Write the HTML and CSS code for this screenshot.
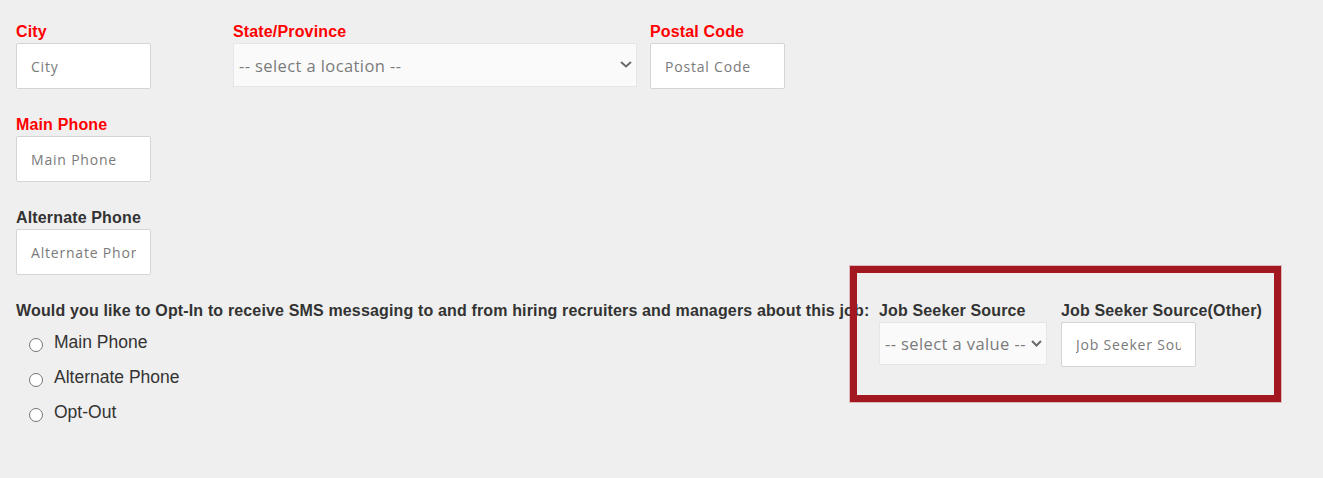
FILE: index.html
```html
<!DOCTYPE html>
<html lang="en">
<head>
    <meta charset="UTF-8">
    <title>Contact Information</title>
    <link rel="stylesheet" href="styles.css">
</head>
<body>
    <form class="form">
        <div class="row row-address">
            <div class="field">
                <label class="required" for="city">City</label>
                <input type="text" id="city" name="city" placeholder="City">
            </div>
            <div class="field">
                <label class="required" for="state">State/Province</label>
                <div class="select-wrap">
                    <select id="state" name="state" class="select-location">
                        <option value="">-- select a location --</option>
                    </select>
                    <svg class="chevron" width="12" height="7" viewBox="0 0 12 7"><polyline points="1,1 6,5.5 11,1" fill="none" stroke="#6a6a6a" stroke-width="2"/></svg>
                </div>
            </div>
            <div class="field">
                <label class="required" for="postalCode">Postal Code</label>
                <input type="text" id="postalCode" name="postalCode" placeholder="Postal Code">
            </div>
        </div>

        <div class="field">
            <label class="required" for="mainPhone">Main Phone</label>
            <input type="text" id="mainPhone" name="mainPhone" placeholder="Main Phone">
        </div>

        <div class="field">
            <label for="altPhone">Alternate Phone</label>
            <input type="text" id="altPhone" name="altPhone" placeholder="Alternate Phone">
        </div>

        <div class="row row-sms">
            <div class="sms">
                <label>Would you like to Opt-In to receive SMS messaging to and from hiring recruiters and managers about this job:</label>
                <ul class="radio-list">
                    <li><input type="radio" id="smsMain" name="sms" value="main"><span>Main Phone</span></li>
                    <li><input type="radio" id="smsAlt" name="sms" value="alternate"><span>Alternate Phone</span></li>
                    <li><input type="radio" id="smsOut" name="sms" value="out"><span>Opt-Out</span></li>
                </ul>
            </div>
            <div class="field source">
                <label for="source">Job Seeker Source</label>
                <div class="select-wrap">
                    <select id="source" name="source" class="select-source">
                        <option value="">-- select a value --</option>
                    </select>
                    <svg class="chevron" width="11" height="7" viewBox="0 0 11 7"><polyline points="1,1 5.5,5.5 10,1" fill="none" stroke="#6a6a6a" stroke-width="2"/></svg>
                </div>
            </div>
            <div class="field">
                <label for="sourceOther">Job Seeker Source(Other)</label>
                <input type="text" id="sourceOther" name="sourceOther" class="input-other" placeholder="Job Seeker Source(Other)">
            </div>
        </div>
    </form>

    <!-- highlight around the source fields -->
    <div class="highlight"></div>
</body>
</html>
```

FILE: styles.css
```css
body {
    margin: 0;
    padding: 22px 16px 0;
    background-color: #efefef;
    font-family: "Liberation Sans", Arial, sans-serif;
    color: #333;
}
.field {
    margin-bottom: 26px;
}
label {
    display: block;
    font-size: 16px;
    font-weight: bold;
    line-height: 19px;
    letter-spacing: 0.15px;
    margin-bottom: 2px;
    color: #333;
    white-space: nowrap;
}
label.required {
    color: #ff0000;
}
input[type="text"] {
    box-sizing: border-box;
    width: 135px;
    height: 46px;
    padding: 0 14px;
    border: 1px solid #d4d4d4;
    border-radius: 2px;
    background-color: #fff;
    font-family: "Open Sans", sans-serif;
    font-size: 14px;
    letter-spacing: 0.8px;
    color: #555;
    outline: none;
}
input::placeholder {
    color: #7a7a7a;
}
.select-wrap {
    position: relative;
}
select {
    box-sizing: border-box;
    appearance: none;
    -webkit-appearance: none;
    width: 100%;
    padding: 0 5px;
    border: 1px solid #e6e6e6;
    border-radius: 0;
    background-color: #fafafa;
    font-family: "Open Sans", sans-serif;
    font-size: 16.5px;
    letter-spacing: 0.4px;
    color: #7a7a7a;
    outline: none;
}
.select-location {
    height: 44px;
}
.select-source {
    height: 43px;
}
.chevron {
    position: absolute;
    right: 5px;
    top: 50%;
    margin-top: -4px;
}
.row {
    display: flex;
}
.row-address {
    display: grid;
    grid-template-columns: 204px 404px 135px;
    column-gap: 13px;
}
.row-sms {
    gap: 13px;
}
.sms {
    width: 850px;
}
.source {
    width: 168px;
}
.input-other {
    height: 45px !important;
    margin-left: 1px;
}
.row-sms .field:last-child label {
    margin-left: 1px;
}
.radio-list {
    list-style: none;
    margin: 5px 0 0;
    padding: 0 0 0 13px;
}
.radio-list li {
    display: flex;
    align-items: center;
    height: 35px;
    font-size: 17.5px;
    color: #333;
}
.radio-list input {
    appearance: none;
    -webkit-appearance: none;
    box-sizing: border-box;
    width: 14px;
    height: 14px;
    margin: 4px 11px 0 0;
    border: 1px solid #767676;
    border-radius: 50%;
    background-color: #fff;
}
.highlight {
    position: absolute;
    left: 850px;
    top: 266px;
    width: 431px;
    height: 136px;
    box-sizing: border-box;
    border: 7px solid #a31820;
    box-shadow: 0 0 0 1px rgba(163, 24, 32, 0.25);
}
```
